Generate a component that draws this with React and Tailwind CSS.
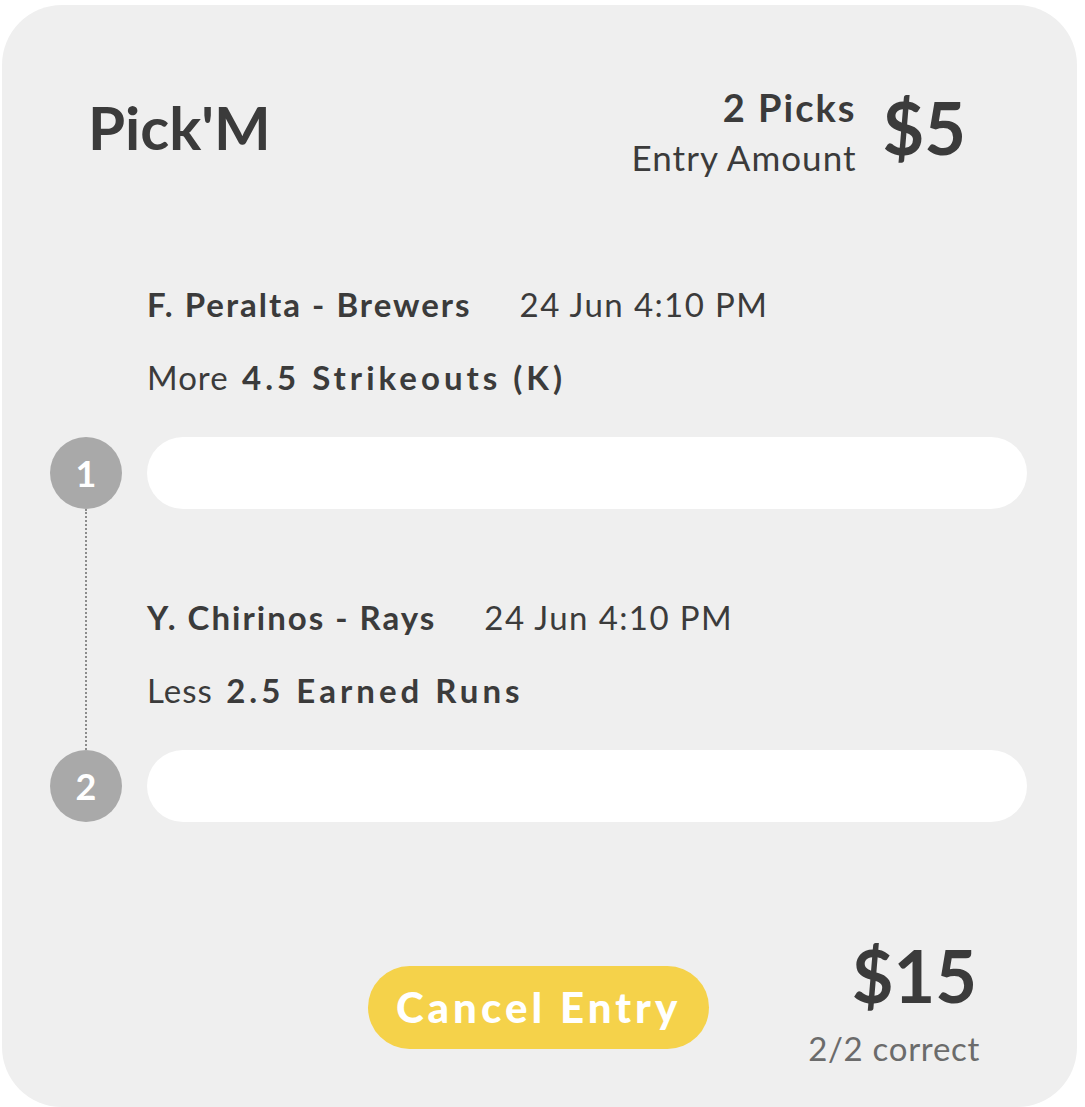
const picks = [
  {
    player: "F. Peralta - Brewers",
    time: "24 Jun 4:10 PM",
    side: "More",
    line: "4.5 Strikeouts (K)",
  },
  {
    player: "Y. Chirinos - Rays",
    time: "24 Jun 4:10 PM",
    side: "Less",
    line: "2.5 Earned Runs",
  },
];

function PickRow({ pick, index }) {
  return (
    <div className="grid grid-cols-[72px_1fr] gap-x-[25px]">
      {/* connector column: dotted line runs down into the numbered dot */}
      <div className="flex flex-col items-center">
        {index > 0 ? (
          <div className="flex-1 border-l-2 border-dotted border-[#8c8c8c]" />
        ) : (
          <div className="flex-1" />
        )}
        <div className="flex h-[72px] w-[72px] shrink-0 items-center justify-center rounded-full bg-[#a9a9a9] text-[36px] font-bold leading-none text-white">
          {index + 1}
        </div>
      </div>

      <div className="flex flex-col pt-[88px]">
        <div className="flex gap-[48px] text-[33px] leading-[40px] text-[#3b3b3b]">
          <span className="font-bold tracking-[2px]">{pick.player}</span>
          <span className="tracking-[1.4px]">{pick.time}</span>
        </div>
        <div className="mt-[33px] text-[33px] leading-[40px] tracking-[1px] text-[#3b3b3b]">
          {pick.side}{" "}
          <span className="ml-[4px] font-bold tracking-[4px]">{pick.line}</span>
        </div>
        <div className="mt-[40px] h-[72px] rounded-full bg-white" />
      </div>
    </div>
  );
}

export default function App() {
  return (
    <div className="min-h-[1107px] bg-white pl-[2px] pt-[5px] font-['Lato',sans-serif]">
      <div className="flex h-[1102px] w-[1075px] flex-col rounded-[60px] bg-[#efefef]">
        {/* header */}
        <div className="flex items-start justify-between pl-[86px] pr-[111px] pt-[77px]">
          <h1 className="mt-[15px] text-[60px] font-bold leading-[60px] text-[#3b3b3b]">
            Pick'M
          </h1>
          <div className="flex items-start gap-[26px]">
            <div className="flex flex-col items-end text-[#3b3b3b]">
              <span className="text-[38px] font-bold leading-[50px] tracking-[2px]">2 Picks</span>
              <span className="text-[35px] leading-[50px] tracking-[1px]">Entry Amount</span>
            </div>
            <span className="mt-[9px] text-[72px] font-bold leading-[72px] text-[#3b3b3b]">
              $5
            </span>
          </div>
        </div>

        {/* picks */}
        <div className="mt-[14px] flex flex-col pl-[48px] pr-[50px]">
          {picks.map((p, i) => (
            <PickRow key={i} pick={p} index={i} />
          ))}
        </div>

        {/* footer */}
        <div className="mt-[117px] flex items-start justify-end gap-[99px] pr-[97px]">
          <button className="mt-[27px] flex h-[83px] w-[341px] items-center justify-center rounded-full bg-[#f5d24a] text-[42px] font-black tracking-[4px] text-white">
            Cancel Entry
          </button>
          <div className="flex flex-col items-end">
            <span className="pr-[3px] text-[72px] font-bold leading-[72px] text-[#3b3b3b]">
              $15
            </span>
            <span className="mt-[17px] text-[33px] leading-[40px] tracking-[0.7px] text-[#6b6b6b]">
              2/2 correct
            </span>
          </div>
        </div>
      </div>
    </div>
  );
}
